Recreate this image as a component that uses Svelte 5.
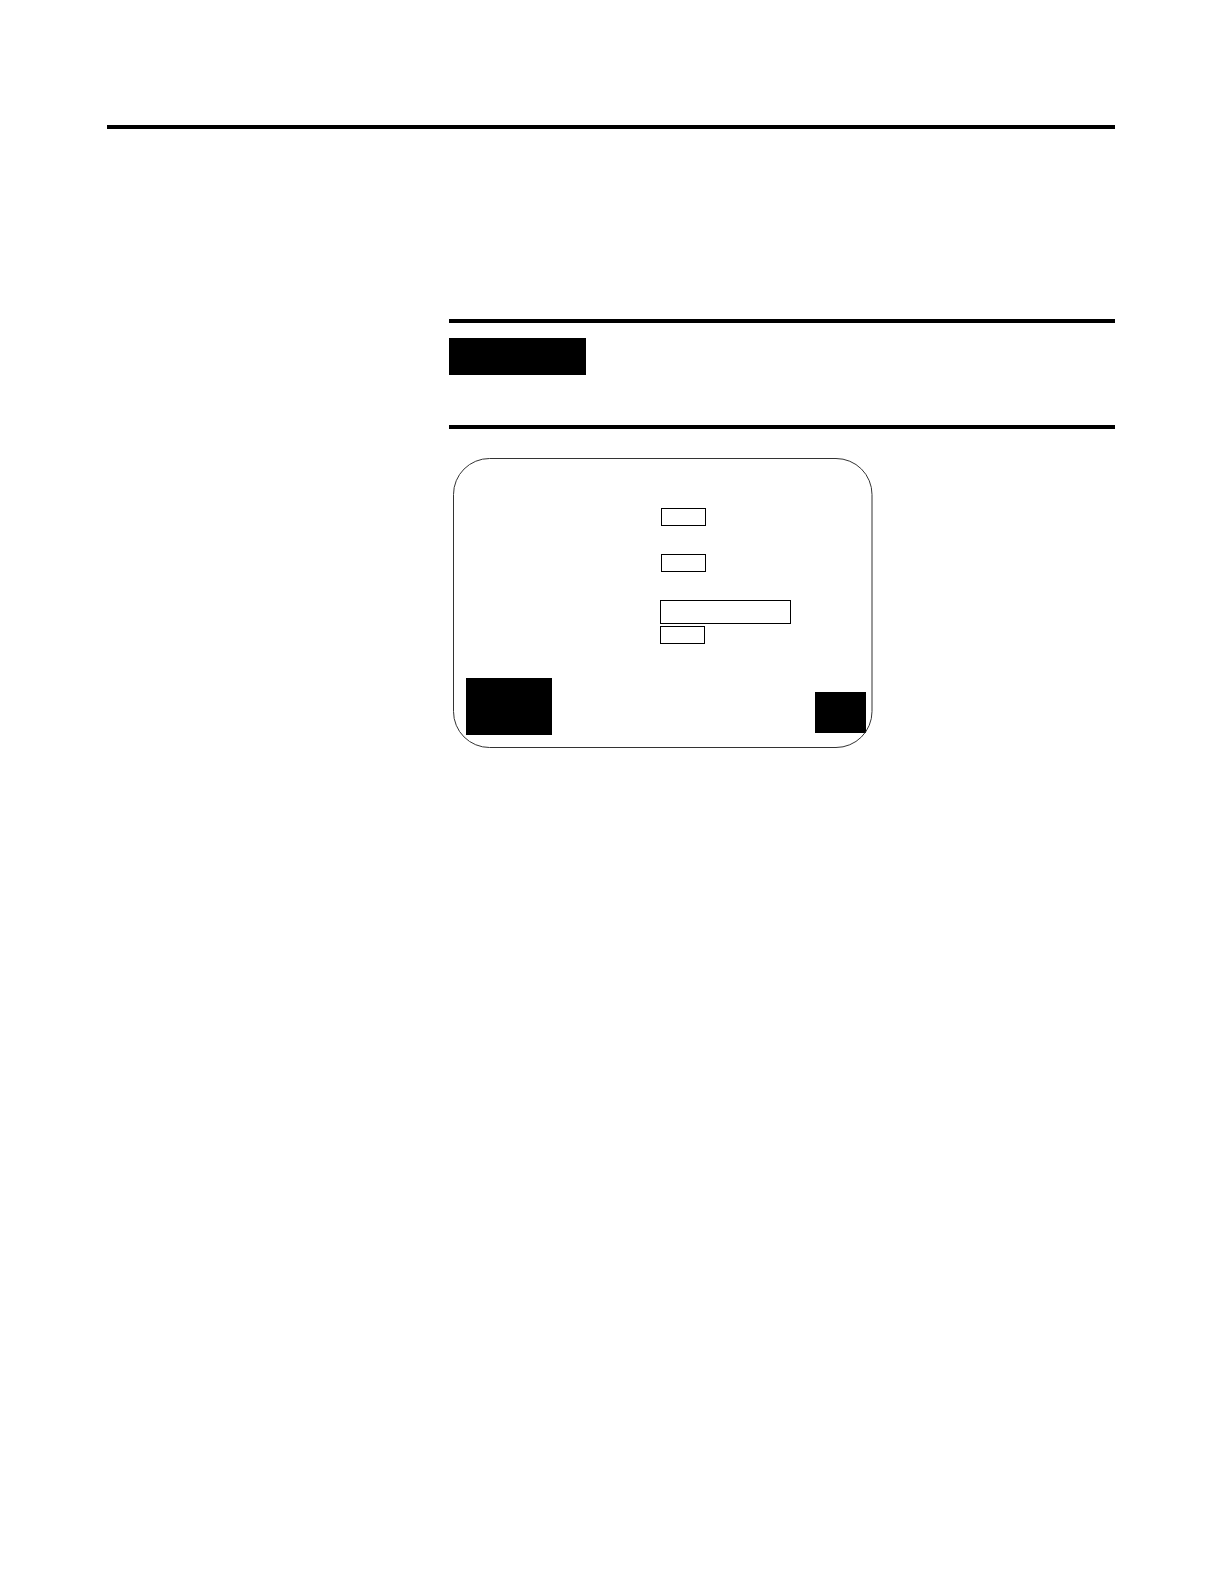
<script>
  const settings = ['First value', 'Second value'];
</script>

<main class="page">
  <header class="rule"></header>

  <div class="content">
    <section class="notice" aria-label="Notice">
      <div class="tag"></div>
    </section>

    <form class="terminal" aria-label="Terminal screen">
      <svg class="outline" aria-hidden="true">
        <rect x="0.5" y="0.5" width="418.5" height="289" rx="36" />
      </svg>

      <div class="settings">
        {#each settings as name}
          <input class="field" type="text" aria-label={name} />
        {/each}
      </div>

      <div class="status">
        <input class="field wide" type="text" aria-label="Status" />
        <input class="field" type="text" aria-label="Status value" />
      </div>

      <div class="keys">
        <button class="key large" type="button" aria-label="Left key"></button>
        <button class="key small" type="button" aria-label="Right key"></button>
      </div>
    </form>
  </div>
</main>

<style>
  :global(body) {
    margin: 0;
    background: #fff;
  }

  .page {
    box-sizing: border-box;
    min-height: 100vh;
    padding: 125px 109px 48px 107px;
    font-family: "Liberation Sans", sans-serif;
  }

  .rule {
    border-top: 4px solid #000;
  }

  .content {
    margin: 190px 0 0 342px;
  }

  .notice {
    border-top: 4px solid #000;
    border-bottom: 4px solid #000;
    padding: 15px 0 50px;
  }

  .tag {
    width: 137px;
    height: 37px;
    background: #000;
  }

  .terminal {
    position: relative;
    box-sizing: border-box;
    width: 420px;
    margin: 29px 0 0 4px;
    padding: 50px 7px 13px 13px;
  }

  .outline {
    position: absolute;
    inset: 0;
    width: 100%;
    height: 100%;
    pointer-events: none;
  }

  .outline rect {
    fill: none;
    stroke: #333;
    stroke-width: 1;
  }

  .settings,
  .status {
    display: flex;
    flex-direction: column;
    align-items: flex-start;
  }

  .settings {
    gap: 28px;
    padding-left: 195px;
  }

  .status {
    gap: 2px;
    margin-top: 28px;
    padding-left: 194px;
  }

  .field {
    box-sizing: border-box;
    width: 45px;
    height: 18px;
    margin: 0;
    padding: 0 4px;
    border: 1px solid #000;
    border-radius: 0;
    background: #fff;
    font: 12px/16px "Liberation Sans", sans-serif;
  }

  .wide {
    width: 131px;
    height: 24px;
  }

  .keys {
    display: flex;
    justify-content: space-between;
    align-items: center;
    margin-top: 34px;
  }

  .key {
    margin: 0;
    padding: 0;
    border: 0;
    border-radius: 0;
    background: #000;
  }

  .large {
    width: 86px;
    height: 57px;
  }

  .small {
    width: 51px;
    height: 41px;
    margin-top: 12px;
  }
</style>
